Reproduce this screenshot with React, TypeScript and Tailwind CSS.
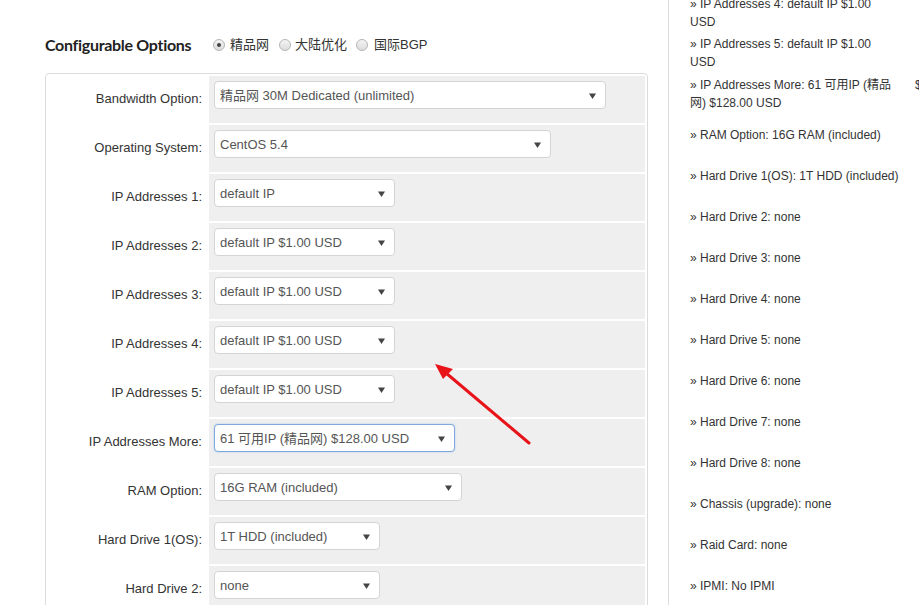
import React from "react";

const rows: { label: string; value: string; w: string; focus?: boolean }[] = [
  { label: "Bandwidth Option:", value: "精品网 30M Dedicated (unlimited)", w: "w-[392px]" },
  { label: "Operating System:", value: "CentOS 5.4", w: "w-[337px]" },
  { label: "IP Addresses 1:", value: "default IP", w: "w-[181px]" },
  { label: "IP Addresses 2:", value: "default IP $1.00 USD", w: "w-[181px]" },
  { label: "IP Addresses 3:", value: "default IP $1.00 USD", w: "w-[181px]" },
  { label: "IP Addresses 4:", value: "default IP $1.00 USD", w: "w-[181px]" },
  { label: "IP Addresses 5:", value: "default IP $1.00 USD", w: "w-[181px]" },
  { label: "IP Addresses More:", value: "61 可用IP (精品网) $128.00 USD", w: "w-[241px]", focus: true },
  { label: "RAM Option:", value: "16G RAM (included)", w: "w-[248px]" },
  { label: "Hard Drive 1(OS):", value: "1T HDD (included)", w: "w-[166px]" },
  { label: "Hard Drive 2:", value: "none", w: "w-[166px]" },
];

const side: { lines: string[]; h: string; price?: string }[] = [
  { lines: ["» IP Addresses 4: default IP $1.00", "USD"], h: "h-[40px]" },
  { lines: ["» IP Addresses 5: default IP $1.00", "USD"], h: "h-[41px]" },
  { lines: ["» IP Addresses More: 61 可用IP (精品", "网) $128.00 USD"], h: "h-[50px]", price: "$" },
  { lines: ["» RAM Option: 16G RAM (included)"], h: "h-[41px]" },
  { lines: ["» Hard Drive 1(OS): 1T HDD (included)"], h: "h-[41px]" },
  { lines: ["» Hard Drive 2: none"], h: "h-[41px]" },
  { lines: ["» Hard Drive 3: none"], h: "h-[41px]" },
  { lines: ["» Hard Drive 4: none"], h: "h-[41px]" },
  { lines: ["» Hard Drive 5: none"], h: "h-[41px]" },
  { lines: ["» Hard Drive 6: none"], h: "h-[41px]" },
  { lines: ["» Hard Drive 7: none"], h: "h-[41px]" },
  { lines: ["» Hard Drive 8: none"], h: "h-[41px]" },
  { lines: ["» Chassis (upgrade): none"], h: "h-[41px]" },
  { lines: ["» Raid Card: none"], h: "h-[41px]" },
  { lines: ["» IPMI: No IPMI"], h: "h-[41px]" },
];

function Radio({ checked }: { checked?: boolean }) {
  return (
    <span className="inline-flex h-[12px] w-[12px] shrink-0 items-center justify-center rounded-full border border-[#b5b5b5] bg-gradient-to-b from-[#f4f4f4] to-[#dcdcdc]">
      {checked && <span className="h-[4px] w-[4px] rounded-full bg-[#444]" />}
    </span>
  );
}

function Select({ value, w, focus }: { value: string; w: string; focus?: boolean }) {
  return (
    <div
      className={`${w} flex h-[28px] items-center justify-between rounded-[4px] border bg-white pl-[5px] pr-[9px] pt-[1px] text-[13px] text-[#555] ${
        focus ? "border-[#7fa7dd] shadow-[0_0_2px_rgba(102,175,233,0.5)]" : "border-[#d4d4d4]"
      }`}
    >
      <span className="whitespace-nowrap">{value}</span>
      <svg width="7" height="6" viewBox="0 0 7 6" className="shrink-0">
        <path d="M0 0.5 H7 L3.5 6 Z" fill="#444" />
      </svg>
    </div>
  );
}

export default function App() {
  return (
    <div
      className="relative flex h-[605px] w-[919px] overflow-hidden bg-white text-[#333]"
      style={{ fontFamily: '"Liberation Sans", Arial, "Noto Sans CJK SC", sans-serif' }}
    >
      <div className="w-[623px] shrink-0 ml-[45px]">
        <div className="mt-[34px] flex h-[22px] items-center">
          <span className="w-[146px] shrink-0 whitespace-nowrap text-[16px] font-bold tracking-[-0.3px] text-[#222]" style={{ fontFamily: 'Lato, "Open Sans", sans-serif' }}>
            Configurable Options
          </span>
          <div className="ml-[22px] flex items-center text-[13px] text-[#333]">
            <Radio checked />
            <span className="ml-[5px]">精品网</span>
            <span className="ml-[10px] flex items-center"><Radio /></span>
            <span className="ml-[4px]">大陆优化</span>
            <span className="ml-[9px] flex items-center"><Radio /></span>
            <span className="ml-[6px]">国际BGP</span>
          </div>
        </div>
        <div className="mt-[17px] w-[603px] rounded-t-[4px] border border-[#dcdcdc] p-[2px] pb-0">
          <div className="flex flex-col gap-[2px]">
            {rows.map((r) => (
              <div key={r.label} className="flex h-[47px] gap-[2px]">
                <div className="w-[159px] shrink-0 pr-[5px] pt-[13px] text-right text-[13px] leading-[20px] text-[#333]">
                  {r.label}
                </div>
                <div className="flex-1 bg-[#efefef] pl-[5px] pt-[5px]">
                  <Select value={r.value} w={r.w} focus={r.focus} />
                </div>
              </div>
            ))}
          </div>
        </div>
      </div>
      <div className="h-full border-l border-[#dcdcdc] pl-[21px]">
        <div className="mt-[-5px] text-[12px] leading-[18px] text-[#333]">
          {side.map((s, i) => (
            <div key={i} className={`${s.h} relative w-[220px]`}>
              {s.lines.map((l, j) => (
                <div key={j} className="whitespace-nowrap">{l}</div>
              ))}
              {s.price && <span className="absolute left-[225px] top-0">{s.price}</span>}
            </div>
          ))}
        </div>
      </div>
      <svg className="pointer-events-none absolute left-0 top-0" width="919" height="605">
        <line x1="529" y1="443" x2="446" y2="373" stroke="#e8141a" strokeWidth="3" strokeLinecap="round" />
        <path d="M435 364 L453 369 L443 379 Z" fill="#e8141a" />
      </svg>
    </div>
  );
}
